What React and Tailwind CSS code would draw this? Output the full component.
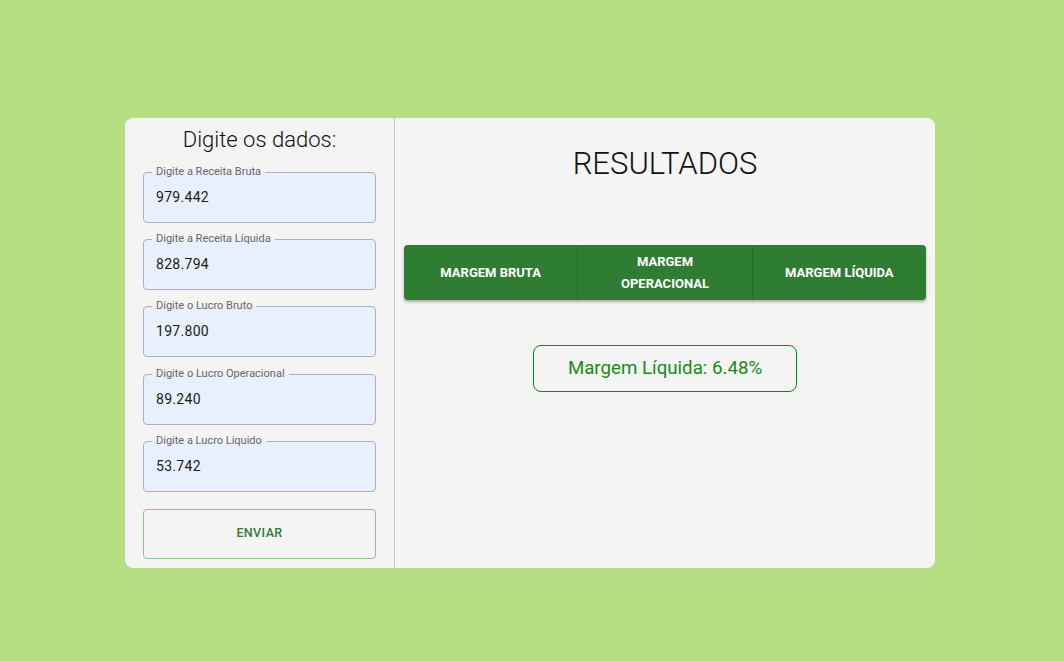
import { useState } from 'react';

const fields = [
  { label: 'Digite a Receita Bruta', value: '979.442' },
  { label: 'Digite a Receita Líquida', value: '828.794' },
  { label: 'Digite o Lucro Bruto', value: '197.800' },
  { label: 'Digite o Lucro Operacional', value: '89.240' },
  { label: 'Digite a Lucro Liquido', value: '53.742' },
];

function Field({ label, value }) {
  return (
    <div className="relative h-[51px] rounded-[4px] border border-[#a9b0bf] bg-[#e8f0fe]">
      <span className="absolute left-[8px] top-[-8px] px-[4px] text-[11px] leading-[14px] text-[#666] bg-[linear-gradient(to_bottom,#f4f4f4_50%,#e8f0fe_50%)]">
        {label}
      </span>
      <div className="flex h-full items-center pl-[12px] text-[14px] tracking-[0.3px] text-[#1a1a1a]">
        {value}
      </div>
    </div>
  );
}

export default function App() {
  const [tab, setTab] = useState('liquida');

  return (
    <div className="min-h-[661px] w-full bg-[#b5df82] flex justify-center pt-[118px] pr-[4px] font-['Roboto',sans-serif]">
      <div className="flex w-[810px] h-[450px] rounded-[8px] bg-[#f4f4f4] overflow-hidden">
        {/* Left: inputs */}
        <div className="w-[270px] border-r border-[#c8c8c8] px-[18px]">
          <h2 className="mt-[7px] mb-[17px] text-center text-[22px] font-light leading-[30px] text-[#111]">Digite os dados:</h2>
          <div className="flex flex-col gap-[16.2px]">
            {fields.map((f) => (
              <Field key={f.label} label={f.label} value={f.value} />
            ))}
          </div>
          <button className="mt-[17px] h-[50px] w-full rounded-[4px] border border-[#8cc48c] text-[12.5px] font-medium tracking-[0.4px] text-[#2e7d32]">
            ENVIAR
          </button>
        </div>

        {/* Right: results */}
        <div className="flex-1 flex flex-col items-center pt-[28px] px-[9px]">
          <h1 className="text-[31px] font-light leading-[36px] text-[#111]">RESULTADOS</h1>
          <div className="mt-[63px] flex w-full h-[55px] rounded-[4px] bg-[#2e7d32] shadow-[0_2px_3px_rgba(0,0,0,0.3)] overflow-hidden">
            <button onClick={() => setTab('bruta')} className="flex-1 border-r border-[#276b2b] text-[13px] font-bold text-white leading-[22px]">
              MARGEM BRUTA
            </button>
            <button onClick={() => setTab('operacional')} className="flex-1 border-r border-[#276b2b] text-[13px] font-bold text-white leading-[22px]">
              MARGEM<br />OPERACIONAL
            </button>
            <button onClick={() => setTab('liquida')} className="flex-1 text-[13px] font-bold text-white leading-[22px]">
              MARGEM LÍQUIDA
            </button>
          </div>
          <div className="mt-[45px] flex h-[47px] w-[264px] items-center justify-center rounded-[8px] border border-[#0a8a0a] text-[18.7px] text-[#1a8a1a]">
            Margem Líquida: 6.48%
          </div>
        </div>
      </div>
    </div>
  );
}
